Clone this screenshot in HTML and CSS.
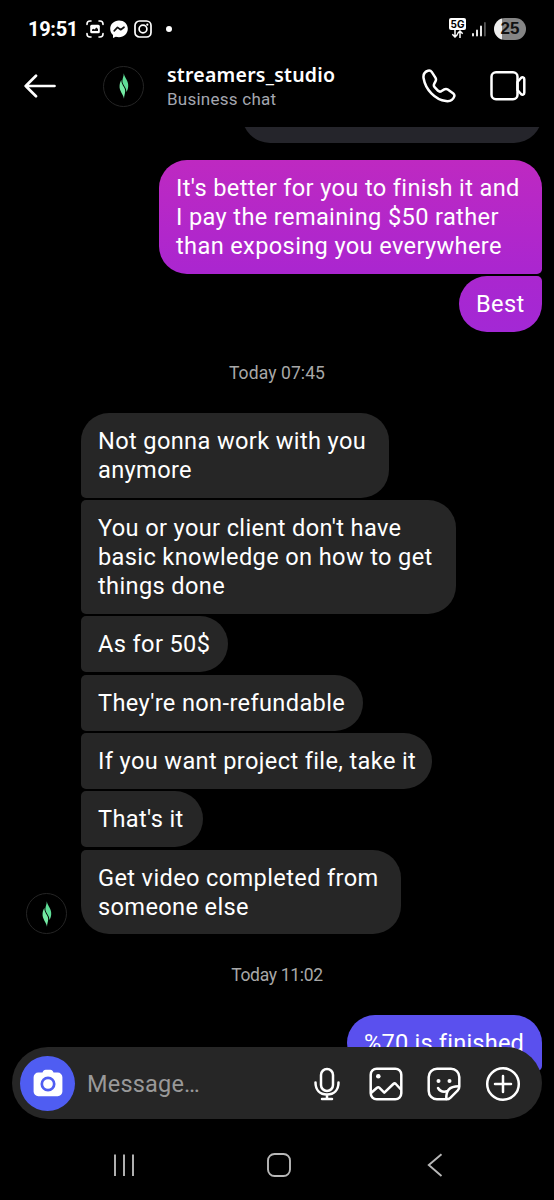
FILE: index.html
```html
<!DOCTYPE html>
<html lang="en">
<head>
<meta charset="utf-8">
<title>streamers_studio</title>
<link rel="stylesheet" href="styles.css">
</head>
<body>
<div class="phone">
  <div class="status">
    <span class="clock">19:51</span>
    <svg class="s-shot" width="18" height="18" viewBox="0 0 18 18" fill="none" stroke="#fff" stroke-width="1.6" stroke-linecap="round"><path d="M1 4.500V4a3 3 0 0 1 3-3h1M13 1h1a3 3 0 0 1 3 3v.5M17 13.500v.5a3 3 0 0 1-3 3h-1M5 17H4a3 3 0 0 1-3-3v-.5"/><rect x="4.200" y="4.800" width="9.600" height="8.400" rx="1.500" fill="#fff" stroke="none"/><path d="M6 11V9.600l1.600-.8 1 .6 1.700-2 1.700 1.600v2z" fill="#111" stroke="none"/></svg>
    <svg class="s-msgr" width="18" height="18" viewBox="0 0 18 18"><path d="M9 .4C4 .4.200 4 .200 8.700c0 2.500 1 4.700 2.800 6.200V18l2.800-1.300c1 .3 2 .5 3.200.5 5 0 8.800-3.700 8.800-8.500S14 .4 9 .4z" fill="#fff"/><path d="M4.200 10.800 7.500 7.400l3.200 2.300 3.300-2.500" fill="none" stroke="#111" stroke-width="1.700" stroke-linecap="round" stroke-linejoin="round"/></svg>
    <svg class="s-insta" width="18" height="18" viewBox="0 0 18 18" fill="none" stroke="#fff" stroke-width="1.700"><rect x="1" y="1" width="16" height="16" rx="4.500"/><circle cx="9" cy="9" r="3.900"/><circle cx="13.300" cy="4.700" r="1.100" fill="#fff" stroke="none"/></svg>
    <span class="dot"></span>
    <div class="status-right">
      <div class="net"><span class="net-label">5G</span><svg width="13" height="8" viewBox="0 0 13 8" fill="none" stroke="#fff" stroke-width="1.500"><path d="M4 0v7M1.300 4.300 4 7l2.700-2.700M9 8V1M6.300 3.700 9 1l2.700 2.700"/></svg></div>
      <svg class="signal" width="14" height="16" viewBox="0 0 14 16" stroke-width="1.800" stroke-linecap="round"><path d="M1 13v1.500M5 9.500v5M9 5.500v9" stroke="#fff"/><path d="M12.900 2v12.500" stroke="#555"/></svg>
      <div class="battery">25</div>
    </div>
  </div>

  <header class="header">
    <svg class="back" width="32" height="24" viewBox="0 0 32 24" fill="none" stroke="#fff" stroke-width="2.700" stroke-linecap="round" stroke-linejoin="round"><path d="M30.500 12H2M12 1.800 1.700 12 12 22.200"/></svg>
    <div class="avatar"><svg width="10" height="26" viewBox="0 0 10 26"><path d="M4.800.3C5.500 5 9.800 8 9.200 13.500 9 16 8.200 17.800 7.400 19 7.600 14 3.400 12 3.400 8 3.500 5 4.700 3.500 4.800.3z" fill="#5fdf98"/><path d="M5 25.700C4.300 21 0 18 .6 12.500.8 10 1.600 8.200 2.400 7 2.200 12 6.200 14 6.200 18 6.100 21 5.100 22.500 5 25.700z" fill="#74eba4"/></svg></div>
    <div class="who">
      <div class="name">streamers_studio</div>
      <div class="sub">Business chat</div>
    </div>
    <svg class="call" width="34" height="34" viewBox="0 0 34 34" fill="none" stroke="#fff" stroke-width="2.500" stroke-linejoin="round"><path d="M6 1.700C3 2.700 1 5.500 1.600 9.200 3.500 20.500 13 30.700 24 32.100c3.900.5 7-1.400 8.200-4.500.5-1.300.2-2.200-.9-3.100l-5.500-4c-1.200-.8-2.300-.8-3.500-.1l-3.100 1.900c-1.200.6-2.100.4-3.100-.5l-3.500-3.700c-1-1.100-1-2.200-.3-3.500l1.300-2.500c.7-1.300.5-2.300-.2-3.500L9.700 2.900C8.800 1.600 7.500 1.200 6 1.700z"/></svg>
    <svg class="video" width="36" height="30" viewBox="0 0 36 30" fill="none" stroke="#fff" stroke-width="2.500" stroke-linejoin="round"><rect x="1.500" y="1.300" width="26" height="27" rx="4.500"/><path d="m27.500 11 3.500-4c1.300-1.300 3.300-.8 3.300 1.200v13.600c0 2-2 2.500-3.300 1.200l-3.500-4z"/></svg>
  </header>

  <main class="chat">
    <div class="bubble out previous"></div>
    <div class="bubble out rant top">It's better for you to finish it and<br>I pay the remaining $50 rather<br>than exposing you everywhere</div>
    <div class="bubble out best bottom">Best</div>
    <div class="stamp morning">Today 07:45</div>
    <div class="thread">
      <div class="avatar"><svg width="10" height="26" viewBox="0 0 10 26"><path d="M4.800.3C5.500 5 9.800 8 9.200 13.500 9 16 8.200 17.800 7.400 19 7.600 14 3.400 12 3.400 8 3.500 5 4.700 3.500 4.800.3z" fill="#5fdf98"/><path d="M5 25.700C4.300 21 0 18 .6 12.500.8 10 1.600 8.200 2.400 7 2.200 12 6.200 14 6.200 18 6.100 21 5.100 22.500 5 25.700z" fill="#74eba4"/></svg></div>
      <div class="messages">
        <div class="bubble in first w-anymore">Not gonna work with you<br>anymore</div>
        <div class="bubble in w-client">You or your client don't have<br>basic knowledge on how to get<br>things done</div>
        <div class="bubble in w-fifty">As for 50$</div>
        <div class="bubble in w-refund">They're non-refundable</div>
        <div class="bubble in w-project">If you want project file, take it</div>
        <div class="bubble in w-thats">That's it</div>
        <div class="bubble in last w-video">Get video completed from<br>someone else</div>
      </div>
    </div>
    <div class="stamp noon">Today 11:02</div>
    <div class="bubble out finished top">%70 is finished</div>
  </main>

  <footer class="composer">
    <div class="camera"><svg width="30" height="28" viewBox="0 0 30 28"><path d="M9.500 3.500C10.300 1.800 11 .8 12.700.8h4.600c1.700 0 2.400 1 3.200 2.700h4.200a4.700 4.700 0 0 1 4.700 4.700v14.300a4.700 4.700 0 0 1-4.700 4.700H5.300a4.700 4.700 0 0 1-4.700-4.700V8.200a4.700 4.700 0 0 1 4.700-4.700z" fill="#fff"/><circle cx="15" cy="15" r="6.200" fill="none" stroke="#4f5df2" stroke-width="2.700"/></svg></div>
    <span class="placeholder">Message…</span>
    <svg class="mic" width="26" height="34" viewBox="0 0 26 34" fill="none" stroke="#fff" stroke-width="2.500" stroke-linecap="round"><rect x="7" y="2" width="12" height="22" rx="6"/><path d="M1.500 15.500C1.500 23 6 27.500 13 27.500S24.500 23 24.500 15.500M13 28v4M8 32h10"/></svg>
    <svg class="photo" width="34" height="34" viewBox="0 0 34 34" fill="none" stroke="#fff" stroke-width="2.500" stroke-linejoin="round"><rect x="1.700" y="1.700" width="30.600" height="30.600" rx="6"/><circle cx="9.300" cy="9.300" r="2.300" fill="#fff" stroke="none"/><path d="m2 26 6-5.200c1-.8 1.700-.7 2.500.1l4.800 4.700L24.300 17c1-.9 1.700-.8 2.500 0L32 22.500"/></svg>
    <svg class="sticker" width="34" height="34" viewBox="0 0 34 34" fill="none" stroke="#fff" stroke-width="2.500" stroke-linejoin="round" stroke-linecap="round"><path d="M19.500 32.300H10A8.300 8.300 0 0 1 1.700 24V10A8.300 8.300 0 0 1 10 1.700h14A8.300 8.300 0 0 1 32.300 10v9.500c0 1.800-.4 2.700-1.500 3.800l-7.500 7.500c-1.100 1.100-2 1.500-3.800 1.500z"/><path d="M19.300 32c-.3-8.500 2.500-12.500 12.500-12.700M11 21c2 3.300 5.500 4.300 9 3.300"/><circle cx="11.500" cy="14" r="2" fill="#fff" stroke="none"/><circle cx="22.500" cy="14" r="2" fill="#fff" stroke="none"/></svg>
    <svg class="plus" width="36" height="36" viewBox="0 0 36 36" fill="none" stroke="#fff" stroke-width="2.500" stroke-linecap="round"><circle cx="18" cy="18" r="15.800"/><path d="M18 10v16M10 18h16"/></svg>
  </footer>

  <nav class="nav">
    <svg class="recents" width="22" height="24" viewBox="0 0 22 24" stroke="#b8b8b8" stroke-width="1.900" fill="none"><path d="M2 1.500v21.500M11 1.500v21.500M20 1.500v21.500"/></svg>
    <svg class="home" width="24" height="24" viewBox="0 0 24 24" stroke="#b8b8b8" stroke-width="1.900" fill="none"><rect x="1" y="1" width="22" height="22" rx="6.500"/></svg>
    <svg class="prev" width="16" height="24" viewBox="0 0 16 24" stroke="#b8b8b8" stroke-width="1.900" fill="none"><path d="M14.500 1.200 1.800 12l12.700 11"/></svg>
  </nav>
</div>
</body>
</html>
```

FILE: styles.css
```css
* { box-sizing: border-box; }
body { margin: 0; background: #000; color: #fff; font-family: Roboto, "Noto Sans", sans-serif; }
svg { display: block; flex: none; }
.phone { position: relative; width: 554px; height: 1200px; overflow: hidden; background: #000; display: flex; flex-direction: column; }

.status { height: 57px; flex: none; display: flex; align-items: center; padding: 1px 28px 0; }
.clock { width: 58px; font: 700 20px/24px Roboto, sans-serif; letter-spacing: -0.3px; white-space: nowrap; }
.s-msgr { margin-left: 6px; }
.s-insta { margin-left: 6px; }
.dot { width: 6px; height: 6px; border-radius: 50%; background: #fff; margin-left: 14px; }
.status-right { margin-left: auto; display: flex; align-items: center; }
.net { width: 17px; display: flex; flex-direction: column; align-items: center; gap: 0; margin: 0 6px 2px 0; }
.net-label { width: 17px; height: 12px; border-radius: 2px; background: #fff; color: #000; font: 700 10px/12px Inter, sans-serif; text-align: center; }
.signal { margin-right: 8px; }
.battery { width: 32px; height: 22px; border-radius: 11px; background: linear-gradient(90deg, #eee 25%, #858585 25%); color: #111; font: 700 17px/22px "Liberation Sans", sans-serif; text-align: center; }

.header { height: 70px; flex: none; display: flex; align-items: center; padding: 0 28px 12px 24px; }
.avatar { width: 41px; height: 41px; flex: none; border: 1px solid #252525; border-radius: 50%; display: flex; align-items: center; justify-content: center; }
.header .avatar { margin-left: 47px; }
.who { margin-left: 23px; width: 255px; padding-top: 1px; }
.name { font: 600 19.500px/24px "Noto Sans", sans-serif; letter-spacing: .23px; white-space: nowrap; }
.sub { font-size: 17px; line-height: 24px; color: #a4a7b0; letter-spacing: .25px; }
.video { margin-left: 34px; }

.chat { height: 944px; flex: none; overflow: hidden; display: flex; flex-direction: column; padding-right: 12px; }
.bubble { flex: none; min-height: 56px; padding: 14.200px 17px 13px; border-radius: 28px; font-size: 23.600px; line-height: 28.800px; letter-spacing: .36px; white-space: nowrap; }
.out { align-self: flex-end; }
.top { border-bottom-right-radius: 5px; }
.bottom { border-top-right-radius: 5px; }
.previous { width: 300px; height: 56px; margin-top: -40.500px; background: #25252b; }
.rant { width: 383px; margin-top: 17.500px; background: linear-gradient(#be29c1, #aa26d0); }
.best { width: 83px; margin-top: 2.400px; background: linear-gradient(#aa27cf, #a328d5); }
.stamp { width: 554px; flex: none; height: 24px; text-align: center; color: #a8a8a8; font-size: 17.500px; line-height: 24px; letter-spacing: .1px; }
.morning { margin-top: 29px; }
.thread { display: flex; align-items: flex-end; gap: 14px; margin-top: 28px; padding-left: 26px; }
.messages { display: flex; flex-direction: column; align-items: flex-start; gap: 2.400px; }
.in { background: #262626; border-top-left-radius: 5px; border-bottom-left-radius: 5px; }
.first { border-top-left-radius: 28px; }
.last { border-bottom-left-radius: 28px; }
.w-anymore { width: 308px; }
.w-client { width: 375px; }
.w-fifty { width: 147px; }
.w-refund { width: 282px; }
.w-project { width: 351px; }
.w-thats { width: 122px; }
.w-video { width: 320px; }
.noon { margin-top: 29px; letter-spacing: -.3px; }
.finished { width: 195px; margin-top: 27.500px; background: #5a50ee; letter-spacing: .2px; }

.composer { position: absolute; left: 12px; top: 1047px; width: 530px; height: 72px; border-radius: 36px; background: #262626; display: flex; align-items: center; padding: 1px 21px 0 8px; }
.camera { width: 55px; height: 55px; flex: none; margin-bottom: 1px; border-radius: 50%; background: #4f5df2; display: flex; align-items: center; justify-content: center; }
.placeholder { flex: 1; margin-left: 12px; color: #999; font-size: 23.500px; line-height: 30px; letter-spacing: .2px; }
.photo { margin-left: 29px; }
.sticker { margin-left: 24px; }
.plus { margin-left: 24px; }

.nav { height: 72px; margin-top: 57px; flex: none; display: flex; align-items: center; padding: 1px 0 0 113px; }
.home { margin-left: 132px; }
.prev { margin-left: 136px; }
```
